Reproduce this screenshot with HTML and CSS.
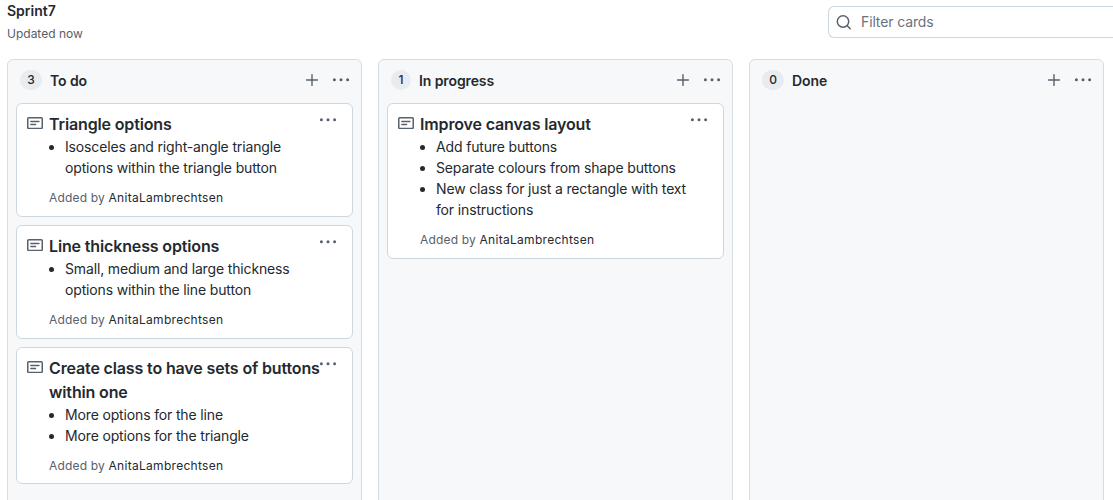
FILE: index.html
```html
<!DOCTYPE html>
<html lang="en">
<head>
<meta charset="utf-8">
<title>Sprint7</title>
<link rel="stylesheet" href="styles.css">
</head>
<body>
<svg class="defs" aria-hidden="true">
  <symbol id="plus" viewBox="0 0 16 16"><path d="M8 2.6v10.8M2.6 8h10.8" fill="none" stroke="currentColor" stroke-width="1.4" stroke-linecap="round"/></symbol>
  <symbol id="dots" viewBox="0 0 18 4"><g fill="currentColor"><circle cx="2.4" cy="1.8" r="1.5"/><circle cx="9" cy="1.8" r="1.5"/><circle cx="15.6" cy="1.8" r="1.5"/></g></symbol>
  <symbol id="note" viewBox="0 0 16 12"><rect x=".75" y=".75" width="14.5" height="10.7" rx="1" fill="none" stroke="currentColor" stroke-width="1.5"/><path d="M3.8 4.5h8.2M3.8 7.5h4.8" fill="none" stroke="currentColor" stroke-width="1.3" stroke-linecap="round"/></symbol>
  <symbol id="search" viewBox="0 0 16 16"><circle cx="7" cy="7.5" r="5.7" fill="none" stroke="currentColor" stroke-width="1.5"/><path d="M11.2 11.7l3 3" stroke="currentColor" stroke-width="1.5" stroke-linecap="round"/></symbol>
</svg>
<header class="top">
  <div>
    <h1 class="name">Sprint7</h1>
    <p class="updated">Updated now</p>
  </div>
  <div class="filter"><svg class="search"><use href="#search"/></svg><span>Filter cards</span></div>
</header>
<main class="board">
  <section class="column">
    <div class="head"><span class="count">3</span><h2 class="heading">To do</h2><svg class="plus"><use href="#plus"/></svg><svg class="dots"><use href="#dots"/></svg></div>
    <article class="card">
      <svg class="note"><use href="#note"/></svg>
      <div class="body">
        <h3 class="title">Triangle options</h3>
        <ul class="list"><li>Isosceles and right-angle triangle<br>options within the triangle button</li></ul>
        <p class="by">Added by <b>AnitaLambrechtsen</b></p>
      </div>
      <svg class="dots"><use href="#dots"/></svg>
    </article>
    <article class="card">
      <svg class="note"><use href="#note"/></svg>
      <div class="body">
        <h3 class="title">Line thickness options</h3>
        <ul class="list"><li>Small, medium and large thickness<br>options within the line button</li></ul>
        <p class="by">Added by <b>AnitaLambrechtsen</b></p>
      </div>
      <svg class="dots"><use href="#dots"/></svg>
    </article>
    <article class="card card-tight">
      <svg class="note"><use href="#note"/></svg>
      <div class="body">
        <h3 class="title">Create class to have sets of buttons<br>within one</h3>
        <ul class="list"><li>More options for the line</li><li>More options for the triangle</li></ul>
        <p class="by">Added by <b>AnitaLambrechtsen</b></p>
      </div>
      <svg class="dots"><use href="#dots"/></svg>
    </article>
  </section>
  <section class="column">
    <div class="head"><span class="count count-one">1</span><h2 class="heading">In progress</h2><svg class="plus"><use href="#plus"/></svg><svg class="dots"><use href="#dots"/></svg></div>
    <article class="card">
      <svg class="note"><use href="#note"/></svg>
      <div class="body">
        <h3 class="title">Improve canvas layout</h3>
        <ul class="list"><li>Add future buttons</li><li>Separate colours from shape buttons</li><li>New class for just a rectangle with text<br>for instructions</li></ul>
        <p class="by">Added by <b>AnitaLambrechtsen</b></p>
      </div>
      <svg class="dots"><use href="#dots"/></svg>
    </article>
  </section>
  <section class="column">
    <div class="head"><span class="count">0</span><h2 class="heading">Done</h2><svg class="plus"><use href="#plus"/></svg><svg class="dots"><use href="#dots"/></svg></div>
  </section>
</main>
</body>
</html>
```
FILE: styles.css
```css
* { box-sizing: border-box; }
body {
  margin: 0;
  height: 500px;
  overflow: hidden;
  background: #fff;
  color: #24292e;
  font: 14px/21px Inter, "Liberation Sans", sans-serif;
  white-space: nowrap;
}
h1, h2, h3, p, ul { margin: 0; padding: 0; }
svg { display: block; flex: none; color: #57616c; }
.defs { display: none; }
.top {
  display: flex;
  justify-content: space-between;
  height: 59px;
  padding-left: 7px;
}
.name { font-size: 14px; line-height: 21px; font-weight: 600; }
.updated { margin-top: 4px; font-size: 12px; line-height: 18px; color: #586069; }
.filter {
  display: flex;
  align-items: center;
  width: 285px;
  height: 32px;
  margin-top: 6px;
  padding-left: 7px;
  border: 1px solid #cdd7df;
  border-right: 0;
  border-radius: 6px 0 0 6px;
  color: #6a737d;
  letter-spacing: -.13px;
}
.filter span { margin-top: -1px; }
.search { width: 16px; height: 16px; margin-right: 9px; }
.board { display: flex; gap: 16px; padding-left: 7px; }
.column {
  flex: none;
  width: 355px;
  height: 460px;
  padding: 0 8px;
  border: 1px solid #d5dde3;
  border-radius: 6px;
  background: #f6f8fa;
}
.head { display: flex; align-items: center; height: 43px; padding: 0 3px 4px 4px; }
.count {
  width: 22px;
  height: 20px;
  margin-right: 8px;
  border-radius: 10px;
  background: #e8ebf0;
  font-size: 12px;
  line-height: 20px;
  font-weight: 500;
  text-align: center;
}
.count-one { width: 20px; }
.heading { flex: 1; padding-top: 2px; font-size: 14px; line-height: 21px; font-weight: 600; letter-spacing: -.1px; }
.plus { width: 16px; height: 16px; margin-right: 12px; }
.dots { width: 18px; height: 4px; }
.card {
  display: flex;
  margin-bottom: 8px;
  padding: 8px 15px 8px 10px;
  border: 1px solid #cdd7df;
  border-radius: 6px;
  background: #fff;
}
.card-tight { padding-bottom: 7px; }
.note { width: 16px; height: 12px; margin: 5px 6px 0 0; }
.card .dots { margin-top: 6px; }
.body { flex: 1; min-width: 0; }
.title { font-size: 16px; line-height: 24px; font-weight: 600; letter-spacing: -.14px; }
.list { padding-left: 16px; letter-spacing: -.15px; }
.by { padding: 10px 0 1px; font-size: 12px; line-height: 19px; letter-spacing: .17px; color: #586069; }
.by b { color: #24292e; font-weight: 400; letter-spacing: .3px; }
```
